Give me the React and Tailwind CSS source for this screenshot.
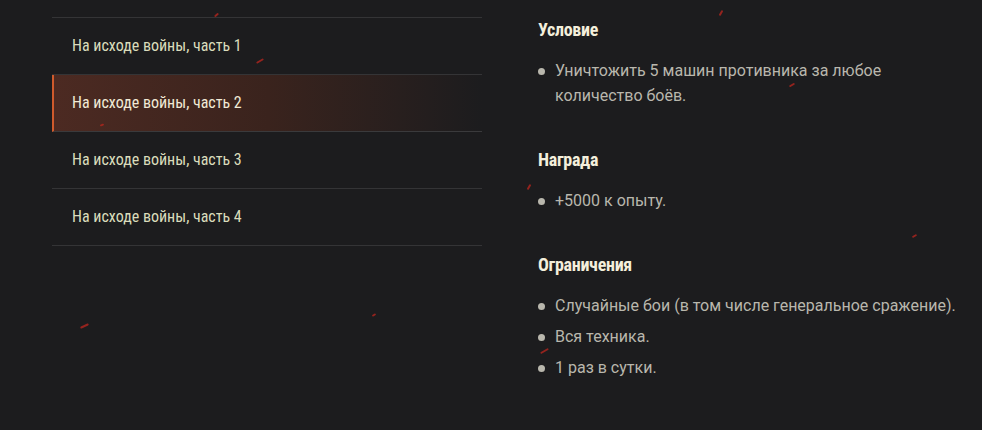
const parts = [1, 2, 3, 4];

const sparks = [
  "left-[214px] top-[14px] w-[5px] rotate-[-40deg]",
  "left-[256px] top-[60px] w-[8px] rotate-[-30deg]",
  "left-[100px] top-[124px] w-[4px] rotate-[-20deg]",
  "left-[80px] top-[325px] w-[9px] rotate-[-25deg]",
  "left-[372px] top-[314px] w-[4px] rotate-[-30deg]",
  "left-[718px] top-[12px] w-[6px] rotate-[-60deg]",
  "left-[789px] top-[84px] w-[6px] rotate-[-30deg]",
  "left-[526px] top-[186px] w-[6px] rotate-[-60deg]",
  "left-[912px] top-[235px] w-[5px] rotate-[-30deg]",
  "left-[540px] top-[350px] w-[9px] rotate-[-30deg]",
];

export default function App() {
  return (
    <div className="relative w-[982px] h-[430px] overflow-hidden bg-[#1c1c1e] font-['Roboto',sans-serif]">
      <div className="flex pt-[17px]">
        {/* Quest list */}
        <div className="ml-[52px] w-[430px] border-t border-[#343436]">
          {parts.map((n) => (
            <div
              key={n}
              className={
                n === 2
                  ? "h-[57px] flex items-center pl-[18px] border-b border-[#3a3a3c] border-l-2 border-l-[#cf5a2c] bg-gradient-to-r from-[#4c2a22] via-[#3a231d] to-[#1c1c1e] text-[#f1ead6]"
                  : "h-[57px] flex items-center pl-[20px] border-b border-[#343436] text-[#dadcbc]"
              }
            >
              <span className="font-['Roboto_Condensed','Liberation_Sans_Narrow','Roboto',sans-serif] text-[16px] font-normal">
                На исходе войны, часть {n}
              </span>
            </div>
          ))}
        </div>

        {/* Details */}
        <div className="ml-[54px] -mt-[17px] pt-[19px] text-[#b9b7ad]">
          <Section title="Условие">
            <Item>
              Уничтожить 5 машин противника за любое
              <br />
              количество боёв.
            </Item>
          </Section>
          <Section title="Награда" className="mt-[41px]">
            <Item>+5000 к опыту.</Item>
          </Section>
          <Section title="Ограничения" className="mt-[41px]">
            <Item>Случайные бои (в том числе генеральное сражение).</Item>
            <Item className="mt-[6px]">Вся техника.</Item>
            <Item className="mt-[6px]">1 раз в сутки.</Item>
          </Section>
        </div>
      </div>

      {sparks.map((s, i) => (
        <span
          key={i}
          className={"absolute h-[2px] rounded-full bg-[#b3261e] opacity-80 " + s}
        />
      ))}
    </div>
  );
}

function Section({ title, className = "", children }) {
  return (
    <div className={className}>
      <h3 className="ml-[2px] font-['Roboto_Condensed','Liberation_Sans_Narrow','Roboto',sans-serif] text-[18px] font-bold text-[#f4efdc] leading-[22px] tracking-[-0.3px]">
        {title}
      </h3>
      <ul className="mt-[17px]">{children}</ul>
    </div>
  );
}

function Item({ className = "", children }) {
  return (
    <li className={"flex text-[16px] leading-[25px] " + className}>
      <span className="mt-[10px] mr-[10px] ml-[2px] w-[7px] h-[7px] rounded-full bg-[#b9b7ad] shrink-0" />
      <span>{children}</span>
    </li>
  );
}
